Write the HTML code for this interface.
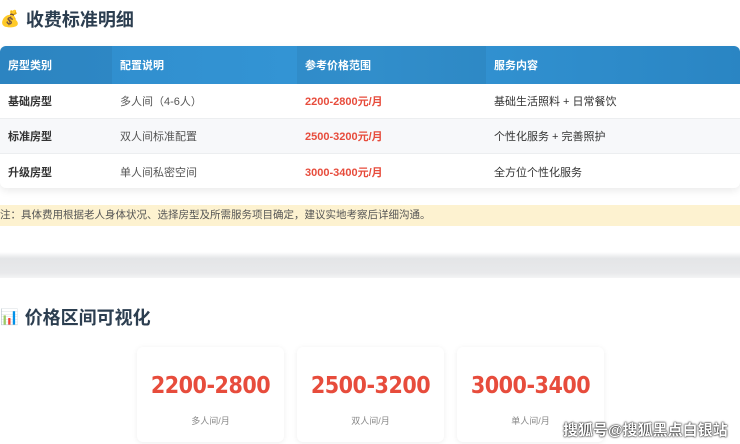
<!DOCTYPE html>
<html><head><meta charset="utf-8"><style>
*{margin:0;padding:0;box-sizing:border-box}
body{width:740px;height:444px;overflow:hidden;background:#fff;font-family:"Liberation Sans","Noto Sans CJK SC",sans-serif;position:relative;color:#333}
.h{position:absolute;left:0;font-size:18px;font-weight:bold;color:#2c3e50;display:flex;align-items:center;gap:6px}
.tbl{position:absolute;left:0;top:46px;width:740px;height:142px;border-radius:6px;overflow:hidden;box-shadow:0 3px 8px rgba(0,0,0,.08)}
.row{display:flex;height:35px;align-items:center;font-size:11px;border-bottom:1px solid #eceef0}
.row div{padding-left:8px;height:100%;display:flex;align-items:center}
.hd{height:38px;background:linear-gradient(90deg,#2f8ccc,#3496d6 50%,#2a85c3);color:#fff;font-weight:bold;border:none}
.hd div:nth-child(odd){background:rgba(0,0,0,.05)}
.c1{width:112px}.c2{width:185px}.c3{width:189px}.c4{flex:1}
.row .c1{font-weight:bold;color:#333}
.hd .c1{color:#fff}
.row .c2{color:#555}
.row .c3{color:#e74c3c;font-weight:bold}
.hd .c2,.hd .c3{color:#fff}
.alt{background:#f7f8fa}
.note{position:absolute;left:0;top:205px;width:740px;height:21px;background:#fdf2d0;font-size:10.5px;color:#555;line-height:21px}
.band{position:absolute;left:0;top:252px;width:740px;height:26px;background:linear-gradient(#fff,#e4e5e7 25%,#e8e9eb 80%,#f4f4f5)}
.card{position:absolute;top:347px;width:147px;height:95px;background:#fff;border-radius:6px;box-shadow:0 1px 6px rgba(0,0,0,.07);text-align:center}
.card b{display:block;margin-top:26px;font-size:23px;color:#e74c3c;font-weight:bold;font-family:"DejaVu Sans Condensed","Liberation Sans",sans-serif;letter-spacing:-0.5px}
.card span{display:block;margin-top:15px;font-size:9px;color:#888}
.wm{position:absolute;left:563px;top:419px;font-size:15px;color:#fff;text-shadow:0 0 2px #000,0 0 1px #000;font-weight:bold}
</style></head><body>
<div class="h" style="top:6px"><span style="font-size:16px">💰</span>收费标准明细</div>
<div class="tbl">
<div class="row hd"><div class="c1">房型类别</div><div class="c2">配置说明</div><div class="c3">参考价格范围</div><div class="c4">服务内容</div></div>
<div class="row"><div class="c1">基础房型</div><div class="c2">多人间（4-6人）</div><div class="c3">2200-2800元/月</div><div class="c4">基础生活照料 + 日常餐饮</div></div>
<div class="row alt"><div class="c1">标准房型</div><div class="c2">双人间标准配置</div><div class="c3">2500-3200元/月</div><div class="c4">个性化服务 + 完善照护</div></div>
<div class="row" style="border:none"><div class="c1">升级房型</div><div class="c2">单人间私密空间</div><div class="c3">3000-3400元/月</div><div class="c4">全方位个性化服务</div></div>
</div>
<div class="note">注：具体费用根据老人身体状况、选择房型及所需服务项目确定，建议实地考察后详细沟通。</div>
<div class="band"></div>
<div class="h" style="top:304px"><span style="font-size:15px">📊</span>价格区间可视化</div>
<div class="card" style="left:137px"><b>2200-2800</b><span>多人间/月</span></div>
<div class="card" style="left:297px"><b>2500-3200</b><span>双人间/月</span></div>
<div class="card" style="left:457px"><b>3000-3400</b><span>单人间/月</span></div>
<div class="wm">搜狐号@搜狐黑点白银站</div>
</body></html>
